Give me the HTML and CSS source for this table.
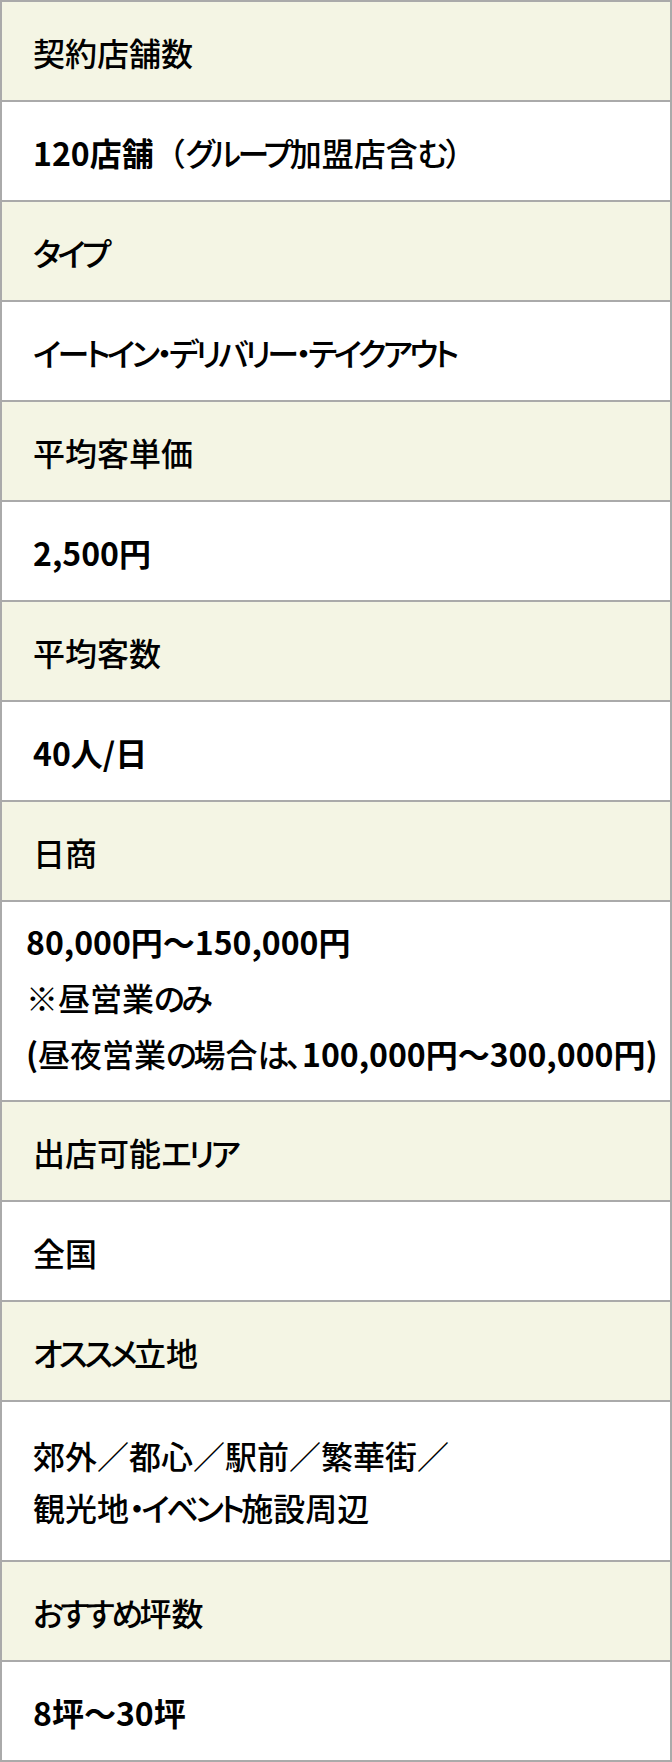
FILE: index.html
```html
<!DOCTYPE html>
<html lang="ja">
<head>
<meta charset="utf-8">
<title>店舗情報</title>
<link rel="stylesheet" href="styles.css">
</head>
<body>
<div class="spec">
  <div class="row label">契約店舗数</div>
  <div class="row value"><span><b>120店舗</b><span class="fw">（</span><span class="k">グループ</span>加盟店含<span class="k">む</span><span class="fw">）</span></span></div>
  <div class="row label"><span class="k">タイプ</span></div>
  <div class="row value"><span class="k">イートイン・デリバリー・テイクアウト</span></div>
  <div class="row label">平均客単価</div>
  <div class="row value"><b>2,500円</b></div>
  <div class="row label">平均客数</div>
  <div class="row value"><b>40人/日</b></div>
  <div class="row label">日商</div>
  <div class="row value sales">
    <div class="lines">
      <p><b>80,000円～150,000円</b></p>
      <p>※昼営業<span class="k">のみ</span></p>
      <p><b>(</b>昼夜営業<span class="k">の</span>場合<span class="k">は</span>、<b>100,000円～300,000円)</b></p>
    </div>
  </div>
  <div class="row label">出店可能<span class="k">エリア</span></div>
  <div class="row value">全国</div>
  <div class="row label"><span class="k">オススメ</span>立地</div>
  <div class="row value location">
    <div class="lines">
      <p>郊外／都心／駅前／繁華街／</p>
      <p>観光地<span class="k">・イベント</span>施設周辺</p>
    </div>
  </div>
  <div class="row label"><span class="k">おすすめ</span>坪数</div>
  <div class="row value"><b>8坪～30坪</b></div>
</div>
</body>
</html>
```

FILE: styles.css
```css
html, body {
  margin: 0;
  padding: 0;
  background: #ffffff;
}

body {
  font-family: "Noto Sans CJK JP", "Noto Sans", sans-serif;
  font-size: 32px;
  color: #000000;
  font-feature-settings: "palt";
}

.spec {
  width: 672px;
  box-sizing: border-box;
  border: 2px solid #aaaaaa;
  border-bottom: none;
}

.row {
  display: flex;
  align-items: center;
  min-height: 100px;
  box-sizing: border-box;
  padding: 2px 31px 0;
  border-bottom: 2px solid #aaaaaa;
  line-height: 1.2;
  font-weight: 500;
}

.label {
  background: #f4f5e4;
}

.value {
  background: #ffffff;
}

.value b {
  font-weight: 700;
}

.k {
  letter-spacing: -3.5px;
}

.fw {
  font-feature-settings: normal;
}

.lines p {
  margin: 0;
}

.sales {
  min-height: 200px;
  padding: 0 0 8px 24px;
}

.sales .lines {
  line-height: 56px;
}

.location {
  min-height: 160px;
  padding-top: 0;
}

.location .lines {
  line-height: 52px;
}
```
